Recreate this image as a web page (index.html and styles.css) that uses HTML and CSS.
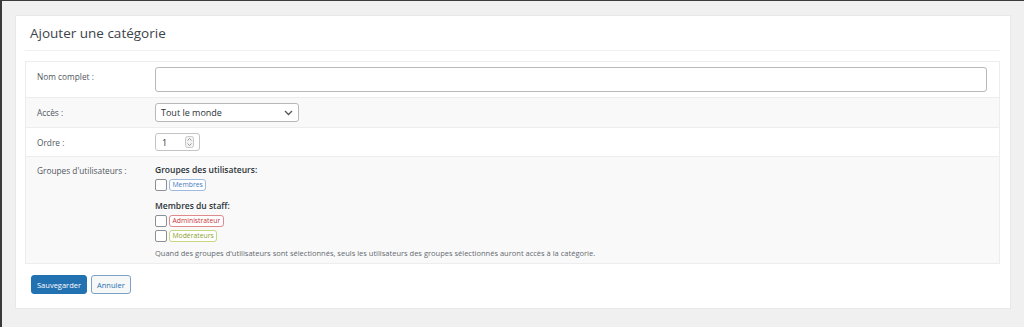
FILE: index.html
```html
<!DOCTYPE html>
<html lang="fr">
<head>
<meta charset="utf-8">
<title>Ajouter une catégorie</title>
<link rel="stylesheet" href="styles.css">
</head>
<body>
<div class="frame">
  <div class="panel">
    <h2 class="title">Ajouter une catégorie</h2>
    <div class="form-table">
      <div class="row">
        <div class="label">Nom complet :</div>
        <div class="field"><input class="text-input" type="text"></div>
      </div>
      <div class="row alt">
        <div class="label">Accès :</div>
        <div class="field">
          <div class="select">
            <span>Tout le monde</span>
            <svg class="chev" width="9" height="6" viewBox="0 0 9 6"><path d="M1 1l3.5 3.5L8 1" fill="none" stroke="#50575e" stroke-width="1.3"/></svg>
          </div>
        </div>
      </div>
      <div class="row">
        <div class="label">Ordre :</div>
        <div class="field">
          <div class="number">
            <span>1</span>
            <span class="spin">
              <svg width="9" height="12" viewBox="0 0 9 12"><rect x="0.5" y="0.5" width="8" height="11" rx="2" fill="#f3f3f3" stroke="#c8c8c8"/><path d="M2.5 4.5l2-2 2 2M2.5 7.5l2 2 2-2" fill="none" stroke="#8c8f94" stroke-width="0.9"/></svg>
            </span>
          </div>
        </div>
      </div>
      <div class="row alt groups">
        <div class="label">Groupes d'utilisateurs :</div>
        <div class="field">
          <div class="group-title">Groupes des utilisateurs:</div>
          <label class="check"><span class="box"></span><span class="badge blue">Membres</span></label>
          <div class="group-title staff">Membres du staff:</div>
          <label class="check"><span class="box"></span><span class="badge red">Administrateur</span></label>
          <label class="check"><span class="box"></span><span class="badge green">Modérateurs</span></label>
          <p class="help">Quand des groupes d'utilisateurs sont sélectionnés, seuls les utilisateurs des groupes sélectionnés auront accès à la catégorie.</p>
        </div>
      </div>
    </div>
    <div class="actions">
      <button class="btn primary">Sauvegarder</button>
      <button class="btn secondary">Annuler</button>
    </div>
  </div>
</div>
</body>
</html>
```
FILE: styles.css
```css
html, body {
  margin: 0;
  padding: 0;
}
body {
  background: #f0f0f1;
  font-family: "Open Sans", "Noto Sans", sans-serif;
  color: #3c434a;
  height: 327px;
  overflow: hidden;
  border-top: 1px solid #3a3a3a;
  border-left: 2px solid #3a3a3a;
  box-sizing: border-box;
}
.frame {
  padding: 14px 13px 0 13px;
}
.panel {
  background: #fff;
  border: 1px solid #e8e8e8;
  padding: 0 10px 14px 9px;
  width: 975px;
}
.title {
  margin: 0;
  height: 35px;
  box-sizing: border-box;
  padding: 8px 0 0 5px;
  font-size: 13.5px;
  font-weight: 400;
  color: #3c434a;
  border-bottom: 1px solid #f0f0f0;
}
.form-table {
  margin-top: 10px;
  border: 1px solid #ededed;
}
.row {
  display: flex;
  padding: 5px 12px 5px 11px;
  background: #fff;
  border-top: 1px solid #ededed;
}
.row:first-child { border-top: 0; }
.row.alt { background: #f9f9f9; }
.label {
  width: 118px;
  flex: none;
  font-size: 8.3px;
  color: #50575e;
  padding-top: 4px;
}
.field { flex: 1; }
.text-input {
  display: block;
  width: 100%;
  height: 25px;
  box-sizing: border-box;
  border: 1px solid #b8b8b8;
  border-radius: 3px;
  background: #fff;
  margin: 0;
}
.select {
  width: 144px;
  height: 19px;
  box-sizing: border-box;
  border: 1px solid #b8b8b8;
  border-radius: 3px;
  background: #fff;
  display: flex;
  align-items: center;
  justify-content: space-between;
  padding: 0 5px 0 5px;
  font-size: 9px;
  color: #2c3338;
}
.number {
  width: 45px;
  height: 18px;
  box-sizing: border-box;
  border: 1px solid #c4c4c4;
  border-radius: 3px;
  background: #fff;
  display: flex;
  align-items: center;
  justify-content: space-between;
  padding: 0 5px 0 6px;
  font-size: 9px;
  color: #2c3338;
}
.spin { display: flex; }
.groups .label { padding-top: 3px; }
.groups .field { padding: 2px 0 0 0; }
.group-title {
  font-size: 8.5px;
  font-weight: 600;
  color: #2c3338;
  margin-bottom: 3px;
}
.group-title.staff { margin-top: 9px; }
.check {
  display: flex;
  align-items: center;
  gap: 2px;
  height: 13px;
  margin-bottom: 2px;
}
.box {
  width: 10px;
  height: 10px;
  border: 1px solid #8c8f94;
  border-radius: 2px;
  background: #fff;
}
.badge {
  font-size: 6.8px;
  line-height: 10px;
  padding: 0 2.5px;
  border: 1px solid;
  border-radius: 3px;
  background: #fff;
}
.badge.blue { color: #3f7bc0; border-color: #9dbbe0; }
.badge.red { color: #c9353a; border-color: #e08a8d; }
.badge.green { color: #8aa12c; border-color: #c6d77f; }
.help {
  margin: 6px 0 0;
  font-size: 7.5px;
  color: #646970;
}
.actions {
  display: flex;
  gap: 4px;
  margin-top: 11px;
  padding-left: 6px;
}
.btn {
  height: 19px;
  box-sizing: border-box;
  font-family: inherit;
  font-size: 7.5px;
  border-radius: 3px;
  padding: 0 5px;
  margin: 0;
}
.btn.primary {
  background: #2271b1;
  border: 1px solid #2271b1;
  color: #fff;
}
.btn.secondary {
  background: #f6f7f7;
  border: 1px solid #7aa2c8;
  color: #2271b1;
}
```
